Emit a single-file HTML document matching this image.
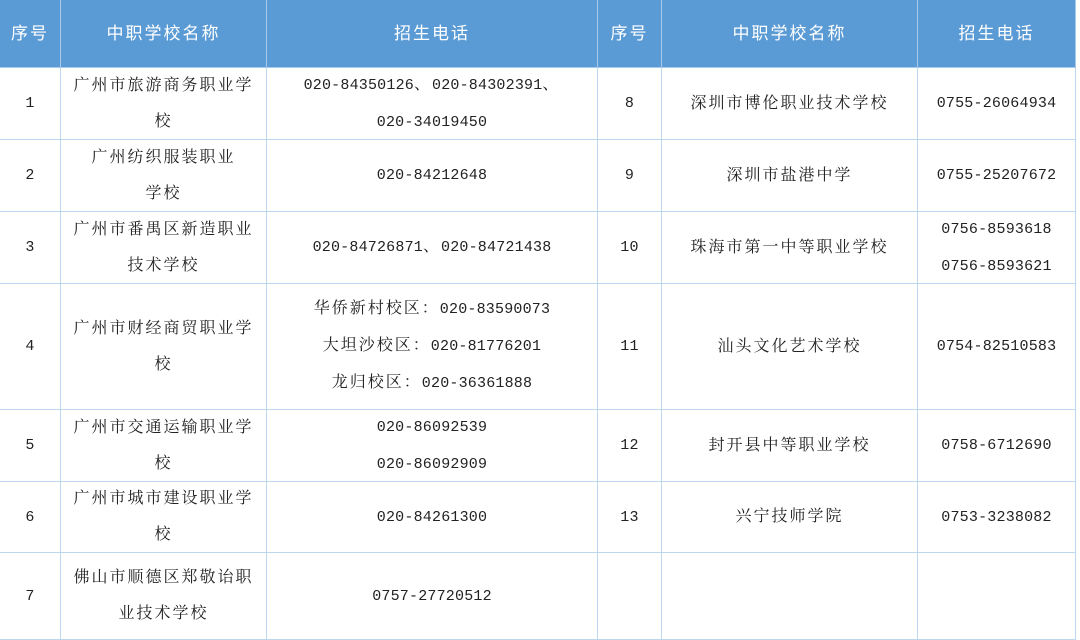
<!DOCTYPE html>
<html><head><meta charset="utf-8"><style>
body{margin:0;width:1080px;height:624px;overflow:hidden;background:#fff;position:relative;font-family:"Liberation Serif","Noto Serif CJK SC",serif;color:#222;}
.c{position:absolute;display:flex;align-items:center;justify-content:center;text-align:center;font-size:16px;letter-spacing:2px;line-height:36px;box-sizing:border-box;border-right:1px solid #bdd7ee;border-bottom:1px solid #bdd7ee;}
.h{background:#5b9bd5;color:#fff;border-color:#a9c9ea;font-family:"Liberation Sans","Noto Sans CJK SC",sans-serif;font-size:17px;}
.n{font-family:"Liberation Mono",monospace;font-size:15px;letter-spacing:0.2px;}
</style></head><body>
<div id="g"></div>
<script>
const X=[0,61,267,598,662,918,1076];
const Y=[0,68,140,212,284,410,482,553,640];
const N=s=>s.replace(/([0-9][0-9\-]*[0-9]|[0-9]+)/g,'<span class="n">$1</span>');
const rows=[
["序号","中职学校名称","招生电话","序号","中职学校名称","招生电话"],
["1","广州市旅游商务职业学<br>校","020-84350126、020-84302391、<br>020-34019450","8","深圳市博伦职业技术学校","0755-26064934"],
["2","广州纺织服装职业<br>学校","020-84212648","9","深圳市盐港中学","0755-25207672"],
["3","广州市番禺区新造职业<br>技术学校","020-84726871、020-84721438","10","珠海市第一中等职业学校","0756-8593618<br>0756-8593621"],
["4","广州市财经商贸职业学<br>校","华侨新村校区：020-83590073<br>大坦沙校区：020-81776201<br>龙归校区：020-36361888","11","汕头文化艺术学校","0754-82510583"],
["5","广州市交通运输职业学<br>校","020-86092539<br>020-86092909","12","封开县中等职业学校","0758-6712690"],
["6","广州市城市建设职业学<br>校","020-84261300","13","兴宁技师学院","0753-3238082"],
["7","佛山市顺德区郑敬诒职<br>业技术学校","0757-27720512","","",""]];
let h='';
rows.forEach((r,i)=>r.forEach((t,j)=>{
h+=`<div class="c${i?'':' h'}" style="left:${X[j]}px;top:${Y[i]}px;width:${X[j+1]-X[j]}px;height:${Y[i+1]-Y[i]}px"><div>${i?N(t):t}</div></div>`;
}));
document.getElementById('g').innerHTML=h;
</script>
</body></html>
